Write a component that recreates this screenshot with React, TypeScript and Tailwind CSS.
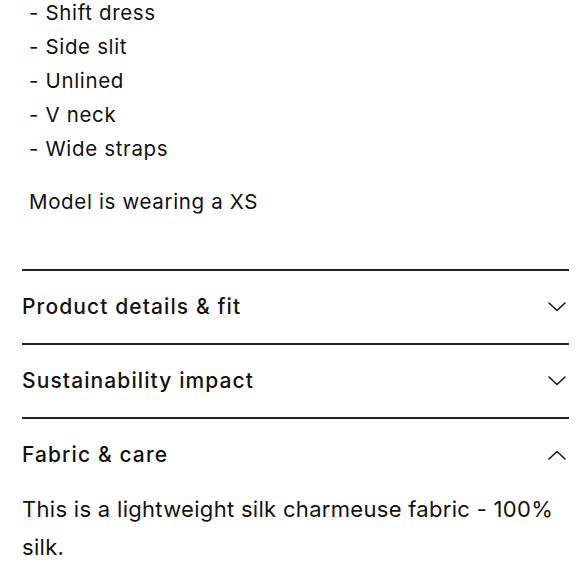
const bullets = ["Shift dress", "Side slit", "Unlined", "V neck", "Wide straps"]

function Chevron({ up }: { up?: boolean }) {
  return (
    <svg width="18" height="10" viewBox="0 0 18 10" fill="none" stroke="#111" strokeWidth="1.5" strokeLinecap="round" strokeLinejoin="round">
      {up ? <path d="M1 9 9 1.5 17 9" /> : <path d="M1 1 9 8.5 17 1" />}
    </svg>
  )
}

function Row({ title, open }: { title: string; open?: boolean }) {
  return (
    <div className="flex items-center justify-between h-[72px] pr-[3px]">
      <span className="text-[21px] font-medium tracking-[1.1px]">{title}</span>
      <Chevron up={open} />
    </div>
  )
}

export default function App() {
  return (
    <div className="w-[580px] h-[580px] overflow-hidden bg-white text-[#111]" style={{ fontFamily: "Inter, 'Liberation Sans', sans-serif" }}>
      <div className="pl-[29px] -mt-[4px] text-[20.5px] tracking-[0.65px]">
        {bullets.map((b) => (
          <div key={b} className="h-[34px] leading-[34px]">- {b}</div>
        ))}
        <div className="mt-[19px] h-[34px] leading-[34px]">Model is wearing a XS</div>
      </div>
      <div className="mt-[50px] ml-[22px] mr-[11px]">
        <div className="border-t-2 border-[#222]">
          <Row title="Product details & fit" />
        </div>
        <div className="border-t-2 border-[#222]">
          <Row title="Sustainability impact" />
        </div>
        <div className="border-t-2 border-[#222]">
          <Row title="Fabric & care" open />
          <p className="text-[22px] leading-[38px] tracking-[0.3px] pr-[4px] -mt-[1px]">
            This is a lightweight silk charmeuse fabric - 100% silk.
          </p>
        </div>
      </div>
    </div>
  )
}
